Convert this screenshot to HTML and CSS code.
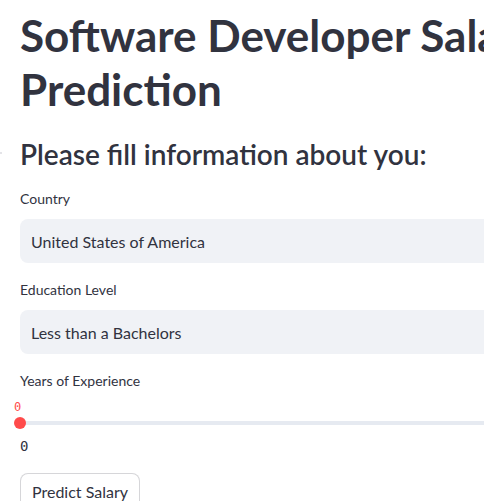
FILE: index.html
```html
<!DOCTYPE html>
<html lang="en">
<head>
<meta charset="utf-8">
<title>Software Developer Salary Prediction</title>
<link rel="stylesheet" href="styles.css">
</head>
<body>
<main class="main">
  <h1 class="title">Software Developer Salary Prediction</h1>
  <h2 class="subtitle"><span class="anchor"></span>Please fill information about you:</h2>
  <div class="field first">
    <label class="label">Country</label>
    <div class="select">United States of America</div>
  </div>
  <div class="field">
    <label class="label">Education Level</label>
    <div class="select">Less than a Bachelors</div>
  </div>
  <div class="field slider-field">
    <label class="label">Years of Experience</label>
    <div class="slider">
      <div class="thumb-value">0</div>
      <div class="track"><div class="thumb"></div></div>
      <div class="ticks"><span>0</span></div>
    </div>
  </div>
  <button class="btn">Predict Salary</button>
</main>
</body>
</html>
```
FILE: styles.css
```css
html, body {
  margin: 0;
  padding: 0;
  background: #ffffff;
  overflow: hidden;
}
body {
  font-family: Lato, "Open Sans", sans-serif;
  color: #31333f;
}
.main {
  width: 704px;
  padding: 8px 20px 0 20px;
  display: flex;
  flex-direction: column;
  align-items: flex-start;
}
.title {
  margin: 0;
  font-size: 44px;
  font-weight: 700;
  line-height: 54px;
  width: 100%;
}
.subtitle {
  position: relative;
  margin: 20px 0 0 0;
  font-size: 28px;
  font-weight: 600;
  line-height: 36px;
}
.anchor {
  position: absolute;
  left: -20px;
  top: 16px;
  width: 2px;
  height: 2px;
  background: #e4e4e8;
}
.field {
  width: 100%;
  display: flex;
  flex-direction: column;
  margin-top: 17px;
}
.field.first {
  margin-top: 17px;
}
.label {
  font-size: 14px;
  line-height: 20px;
  margin-bottom: 10px;
}
.slider-field .label {
  margin-bottom: 8px;
}
.select {
  height: 44px;
  background: #f0f2f6;
  border-radius: 8px;
  display: flex;
  align-items: center;
  padding-left: 11px;
  font-size: 16px;
}
.slider {
  position: relative;
  height: 58px;
}
.thumb-value {
  font-family: "DejaVu Sans Mono", monospace;
  font-size: 12px;
  color: #ff4b4b;
  margin-left: -6px;
  line-height: 16px;
}
.track {
  position: relative;
  height: 4px;
  background: #e6eaf1;
  border-radius: 2px;
  margin-top: 6px;
}
.thumb {
  position: absolute;
  left: -6px;
  top: -4px;
  width: 12px;
  height: 12px;
  border-radius: 50%;
  background: #ff4b4b;
}
.ticks {
  display: flex;
  justify-content: space-between;
  font-family: "DejaVu Sans Mono", monospace;
  font-size: 14px;
  margin-top: 13px;
  color: #31333f;
}
.btn {
  margin-top: 16px;
  font-family: inherit;
  font-size: 16px;
  color: #31333f;
  background: #ffffff;
  border: 1px solid rgba(49, 51, 63, 0.2);
  border-radius: 8px;
  padding: 6px 11px;
  line-height: 24px;
}
```
